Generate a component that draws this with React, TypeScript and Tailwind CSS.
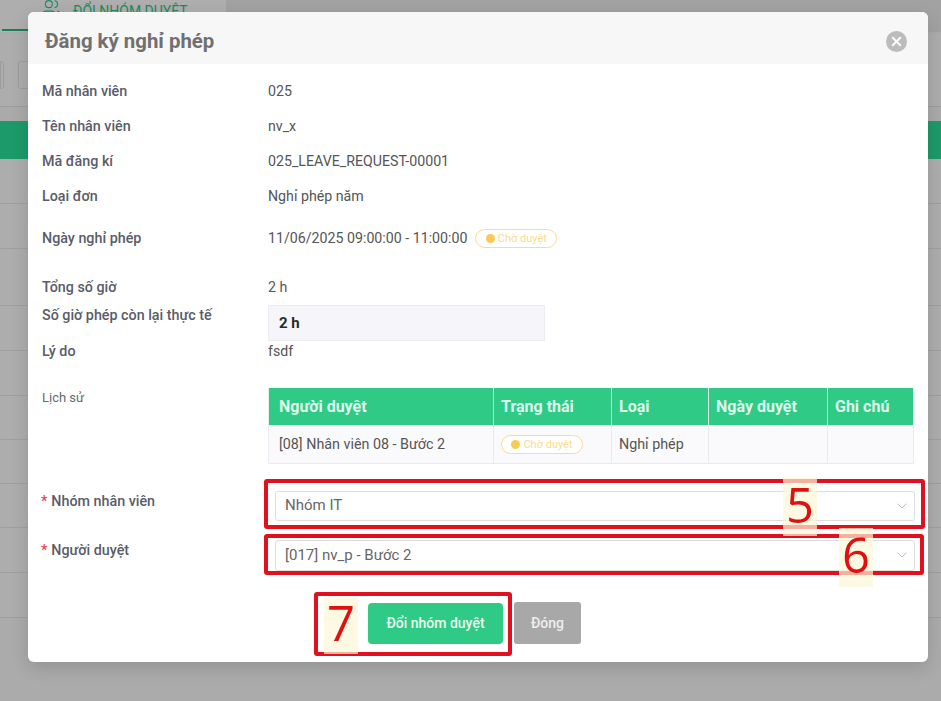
import { Users, ChevronDown, X } from "lucide-react";

const rows = [
  ["Mã nhân viên", "025"],
  ["Tên nhân viên", "nv_x"],
  ["Mã đăng kí", "025_LEAVE_REQUEST-00001"],
  ["Loại đơn", "Nghỉ phép năm"],
];

function Badge() {
  return (
    <span className="inline-flex h-[19px] w-[82px] items-center justify-center gap-[3px] rounded-full border border-[#fbdc8e] bg-white text-[11px] text-[#f8dc8f]">
      <span className="h-[9px] w-[9px] rounded-full bg-[#f9cb56]" />
      Chờ duyệt
    </span>
  );
}

function Field({ label, value, h, mb }: { label: string; value: string; h: string; mb: string }) {
  return (
    <div className={`flex items-start ${mb}`}>
      <div className="-ml-[1px] flex w-[234px] shrink-0 text-[14.3px] font-medium leading-[20px] text-[#5a5c69]">
        <span className="mr-[4px] text-[#e5484d]">*</span>
        {label}
      </div>
      <div className={`flex ${h} flex-1 items-center justify-between rounded-[3px] border border-[#dddddd] bg-white pl-[9px] pr-[4px] text-[15px] text-[#666666]`}>
        {value}
        <ChevronDown size={16} strokeWidth={1.5} className="text-[#bdbdbd]" />
      </div>
    </div>
  );
}

function Num({ n, className }: { n: string; className: string }) {
  return (
    <div className={`absolute flex items-center justify-center bg-[#fdf6d5]/70 pb-[6px] font-['Open_Sans',sans-serif] text-[49px] leading-none text-[#e0100f] ${className}`}>
      {n}
    </div>
  );
}

export default function App() {
  return (
    <div className="relative h-[701px] w-[941px] overflow-hidden bg-[#ababab] font-['Roboto',sans-serif]">
      {/* page behind the overlay */}
      <div className="flex h-[32px] bg-[#a2a2a2]">
        <div className="flex h-[32px] w-[226px] items-start gap-[11px] border-b border-[#b2b2b2] bg-[#aeaeae] pl-[41px] text-[14px] text-[#1e8a60]">
          <Users size={21} strokeWidth={1.2} className="-mt-[2px]" />
          <span className="mt-[1px]">ĐỔI NHÓM DUYỆT</span>
        </div>
      </div>
      <div className="ml-[2px] h-[2px] w-[26px] -translate-y-[3px] bg-[#178055]" />
      <div className="flex h-[73px] items-start gap-[14px] border-b border-[#9d9d9d] bg-[#adadad] pt-[27px]">
        <div className="h-[28px] w-[4px] rounded-r-[3px] border border-[#9c9c9c]" />
        <div className="h-[28px] w-[30px] rounded-[3px] border border-[#9c9c9c]" />
      </div>
      <div className="h-[14px] bg-[#aaaaaa]" />
      <div className="h-[38px] bg-[#1d9a6a]" />
      <div className="flex flex-col">
        {[45, 45, 57, 45, 45, 44, 44, 44, 45, 45].map((h, i) => (
          <div key={i} className="border-b border-[#a0a0a0] bg-[#adadad]" style={{ height: h }} />
        ))}
      </div>

      {/* modal */}
      <div className="absolute left-[28px] top-[12px] h-[650px] w-[900px] rounded-[6px] bg-white shadow-[0_6px_18px_rgba(0,0,0,0.14)]">
        <div className="flex h-[52px] items-center justify-between rounded-t-[6px] bg-[#f7f7f7] pl-[17px] pr-[21px] pt-[6px]">
          <h2 className="text-[20.4px] font-bold text-[#707070]">Đăng ký nghỉ phép</h2>
          <div className="flex h-[21px] w-[21px] items-center justify-center rounded-full bg-[#bcbcbc]">
            <X size={15} strokeWidth={3} className="text-white" />
          </div>
        </div>

        <div className="px-[14px] pt-[17px]">
          {rows.map(([l, v]) => (
            <div key={l} className="flex h-[35px] items-start text-[14.2px] leading-[20px]">
              <div className="w-[226px] text-[14.3px] font-medium text-[#5a5c69]">{l}</div>
              <div className="text-[#555555]">{v}</div>
            </div>
          ))}
          <div className="mt-[7px] flex h-[49px] items-start text-[14.2px] leading-[20px]">
            <div className="w-[226px] text-[14.3px] font-medium text-[#5a5c69]">Ngày nghỉ phép</div>
            <div className="flex items-center gap-[7px] text-[#555555]">
              11/06/2025 09:00:00 - 11:00:00
              <span className="ml-[1px] mt-[1px] flex"><Badge /></span>
            </div>
          </div>
          <div className="flex h-[28px] items-start text-[14.2px] leading-[20px]">
            <div className="w-[226px] text-[14.3px] font-medium text-[#5a5c69]">Tổng số giờ</div>
            <div className="text-[#555555]">2 h</div>
          </div>
          <div className="flex h-[36px] items-start text-[14.2px] leading-[20px]">
            <div className="w-[226px] text-[14.3px] font-medium text-[#5a5c69]">Số giờ phép còn lại thực tế</div>
            <div className="flex h-[36px] w-[277px] items-center border border-[#ececf2] bg-[#f5f5fa] pl-[10px] text-[15px] font-bold text-[#2b2b2b]">
              2 h
            </div>
          </div>
          <div className="flex h-[47px] items-start text-[14.2px] leading-[20px]">
            <div className="w-[226px] text-[14.3px] font-medium text-[#5a5c69]">Lý do</div>
            <div className="text-[#555555]">fsdf</div>
          </div>

          <div className="flex items-start">
            <div className="w-[226px] pt-[1px] text-[13px] leading-[18px] text-[#66686f]">Lịch sử</div>
            <table className="ml-[1px] w-[645px] table-fixed border-collapse text-[14.3px]">
              <colgroup>
                <col className="w-[225px]" />
                <col className="w-[118px]" />
                <col className="w-[97px]" />
                <col className="w-[119px]" />
                <col className="w-[86px]" />
              </colgroup>
              <thead>
                <tr className="h-[37px] bg-[#2fcb86] text-left text-[16px] font-bold text-[#dff7ec]">
                  {["Người duyệt", "Trạng thái", "Loại", "Ngày duyệt", "Ghi chú"].map((h) => (
                    <th key={h} className="border-x border-[#dff5ea] px-[7px] pt-[1px] first:pl-[10px]">{h}</th>
                  ))}
                </tr>
              </thead>
              <tbody>
                <tr className="h-[38px] bg-[#fafafc] text-[#555555]">
                  <td className="border border-[#ebebef] pl-[10px] pt-[1px]">[08] Nhân viên 08 - Bước 2</td>
                  <td className="border border-[#ebebef] pl-[7px] pt-[2px]"><Badge /></td>
                  <td className="border border-[#ebebef] pl-[7px] pt-[1px]">Nghỉ phép</td>
                  <td className="border border-[#ebebef]" />
                  <td className="border border-[#ebebef]" />
                </tr>
              </tbody>
            </table>
          </div>

          <div className="-mr-[1px] mt-[27px]">
            <Field label="Nhóm nhân viên" value="Nhóm IT" h="h-[30px]" mb="mb-[19px]" />
            <Field label="Người duyệt" value="[017] nv_p - Bước 2" h="h-[31px]" mb="mb-0" />
          </div>

          <div className="ml-[326px] mt-[31px] flex items-end gap-[11px]">
            <button className="h-[41px] w-[135px] rounded-[4px] bg-[#2fcb86] text-[14px] font-medium text-[#eafaf2]">Đổi nhóm duyệt</button>
            <button className="h-[42px] w-[67px] rounded-[3px] bg-[#a8a8a8] pt-[1px] text-[14px] font-medium text-[#eeeeee]">Đóng</button>
          </div>
        </div>
      </div>

      {/* red annotations */}
      <div className="absolute left-[264px] top-[479px] h-[50px] w-[661px] rounded-[3px] border-[4px] border-[#e0101f]" />
      <div className="absolute left-[264px] top-[534px] h-[41px] w-[660px] rounded-[3px] border-[4px] border-[#e0101f]" />
      <div className="absolute left-[314px] top-[592px] h-[64px] w-[198px] rounded-[3px] border-[4px] border-[#e0101f]" />
      <Num n="5" className="left-[783px] top-[478px] h-[58px] w-[34px]" />
      <Num n="6" className="left-[839px] top-[528px] h-[59px] w-[34px]" />
      <Num n="7" className="left-[324px] top-[597px] h-[57px] w-[34px]" />
    </div>
  );
}
